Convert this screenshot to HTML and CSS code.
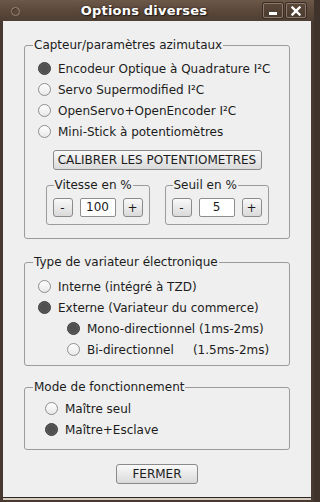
FILE: index.html
```html
<!DOCTYPE html>
<html lang="fr">
<head>
<meta charset="utf-8">
<title>Options diverses</title>
<link rel="stylesheet" href="styles.css">
</head>
<body>
<div class="window">
  <div class="titlebar">
    <div class="tb-left"><span class="tb-dot"></span></div>
    <div class="tb-title">Options diverses</div>
    <div class="tb-btns">
      <span class="tb-btn"><svg width="10" height="10" viewBox="0 0 10 10"><rect x="1" y="6" width="8" height="3" fill="#fff"/></svg></span>
      <span class="tb-btn"><svg width="10" height="10" viewBox="0 0 10 10"><path d="M1.5 1.5 L8.5 8.5 M8.5 1.5 L1.5 8.5" stroke="#fff" stroke-width="2.4" stroke-linecap="square" fill="none"/></svg></span>
    </div>
  </div>
  <div class="content">
    <fieldset class="group g1">
      <legend>Capteur/paramètres azimutaux</legend>
      <div class="inner">
        <div class="radio on"><span class="dot"></span>Encodeur Optique à Quadrature I²C</div>
        <div class="radio"><span class="dot"></span>Servo Supermodified I²C</div>
        <div class="radio"><span class="dot"></span>OpenServo+OpenEncoder I²C</div>
        <div class="radio"><span class="dot"></span>Mini-Stick à potentiomètres</div>
        <div class="calib-row"><button class="btn calib">CALIBRER LES POTENTIOMETRES</button></div>
        <div class="subs">
          <fieldset class="sub">
            <legend>Vitesse en %</legend>
            <div class="spin"><button class="btn sbtn">-</button><span class="field">100</span><button class="btn sbtn">+</button></div>
          </fieldset>
          <fieldset class="sub">
            <legend>Seuil en %</legend>
            <div class="spin"><button class="btn sbtn">-</button><span class="field">5</span><button class="btn sbtn">+</button></div>
          </fieldset>
        </div>
      </div>
    </fieldset>

    <fieldset class="group g2">
      <legend>Type de variateur électronique</legend>
      <div class="inner">
        <div class="radio"><span class="dot"></span>Interne (intégré à TZD)</div>
        <div class="radio on"><span class="dot"></span>Externe (Variateur du commerce)</div>
        <div class="radio on indent"><span class="dot"></span>Mono-directionnel (1ms-2ms)</div>
        <div class="radio indent"><span class="dot"></span><span class="pre">Bi-directionnel     (1.5ms-2ms)</span></div>
      </div>
    </fieldset>

    <fieldset class="group g3">
      <legend>Mode de fonctionnement</legend>
      <div class="inner">
        <div class="radio"><span class="dot"></span>Maître seul</div>
        <div class="radio on"><span class="dot"></span>Maître+Esclave</div>
      </div>
    </fieldset>

    <div class="close-row"><button class="btn fermer">FERMER</button></div>
  </div>
</div>
</body>
</html>
```
FILE: styles.css
```css
html, body {
  margin: 0;
  padding: 0;
}
body {
  background: #3f332b;
  font-family: "DejaVu Sans", "Liberation Sans", sans-serif;
  font-size: 12px;
  color: #1c1c1c;
}
.window {
  width: 314px;
  height: 502px;
  box-sizing: border-box;
  display: flex;
  flex-direction: column;
  background: #47392f;
}
.titlebar {
  flex: none;
  height: 21px;
  display: flex;
  align-items: center;
  background: linear-gradient(#6c5849, #584639 60%, #4e3e33);
}
.tb-left {
  width: 30px;
  display: flex;
  align-items: center;
}
.tb-dot {
  width: 9px;
  height: 9px;
  box-sizing: border-box;
  margin: 1px 0 0 11px;
  border-radius: 50%;
  border: 1px solid #9a8577;
  box-shadow: inset 1px 1px 0 #3f3128;
}
.tb-title {
  flex: 1;
  text-align: center;
  font-weight: bold;
  font-size: 13px;
  letter-spacing: 0.2px;
  line-height: 21px;
  margin-top: -1px;
  color: #ffffff;
  text-shadow: 1px 1px 1px #241b15, 0 0 2px #2a1f18;
}
.tb-btns {
  width: 56px;
  display: flex;
  gap: 3px;
  padding-left: 5px;
  box-sizing: border-box;
}
.tb-btn {
  width: 20px;
  height: 15px;
  box-sizing: border-box;
  border: 1px solid #8d796b;
  border-radius: 2px;
  background: linear-gradient(#594739, #4a3b30);
  box-shadow: 0 0 0 1px #3a2d25;
  display: flex;
  align-items: center;
  justify-content: center;
}
.content {
  flex: 1;
  margin: 0 3px 5px;
  background: #efefef;
  padding: 17px 21px 0;
  box-shadow: 0 1px 0 #2e2520, 0 3px 0 #d4ccbf;
}
fieldset {
  margin: 0;
  padding: 0;
  min-width: 0;
  border: 1px solid #9b9b9b;
  border-radius: 3px;
}
legend {
  margin-left: 8px;
  padding: 0 1px;
  line-height: 14px;
  font-size: 12px;
}
.g1 .inner {
  padding: 6px 0 13px 13px;
}
.g2 {
  margin-top: 16px;
}
.g2 .inner {
  padding: 7px 0 5px 13px;
}
.g3 {
  margin-top: 14px;
}
.g3 .inner {
  padding: 4px 0 9px 20px;
}
.radio {
  height: 21px;
  display: flex;
  align-items: center;
  gap: 7px;
  white-space: nowrap;
}
.radio.indent {
  padding-left: 29px;
}
.pre {
  white-space: pre;
}
.dot {
  flex: none;
  width: 13px;
  height: 13px;
  box-sizing: border-box;
  border-radius: 50%;
  border: 1px solid #8e8e8e;
  background: linear-gradient(#ffffff, #e8e8e8);
}
.radio.on .dot {
  border-color: #3e3e3e;
  background: #505050;
  box-shadow: inset 0 0 0 1px #5e5e5e;
}
.btn {
  font-family: "DejaVu Sans", "Liberation Sans", sans-serif;
  font-size: 12px;
  color: #1c1c1c;
  padding: 0;
  margin: 0;
  height: 20px;
  box-sizing: border-box;
  border: 1px solid #8a8a8a;
  border-radius: 3px;
  background: linear-gradient(#f9f9f9, #e9e9e9 50%, #dadada);
}
.calib-row {
  margin-top: 8px;
  display: flex;
  justify-content: center;
  padding-right: 13px;
}
.calib {
  width: 209px;
}
.subs {
  margin-top: 8px;
  display: flex;
  justify-content: center;
  gap: 15px;
  padding-right: 13px;
}
.sub {
  width: 104px;
  box-sizing: border-box;
}
.sub legend {
  margin-left: 7px;
}
.spin {
  display: flex;
  justify-content: center;
  gap: 7px;
  padding: 6px 0 7px;
}
.sbtn {
  width: 20px;
  height: 19px;
}
.field {
  width: 36px;
  height: 19px;
  box-sizing: border-box;
  border: 1px solid #8e8e8e;
  border-radius: 2px;
  background: #ffffff;
  text-align: center;
  line-height: 17px;
}
.close-row {
  margin-top: 14px;
  display: flex;
  justify-content: center;
}
.fermer {
  width: 82px;
}
```
